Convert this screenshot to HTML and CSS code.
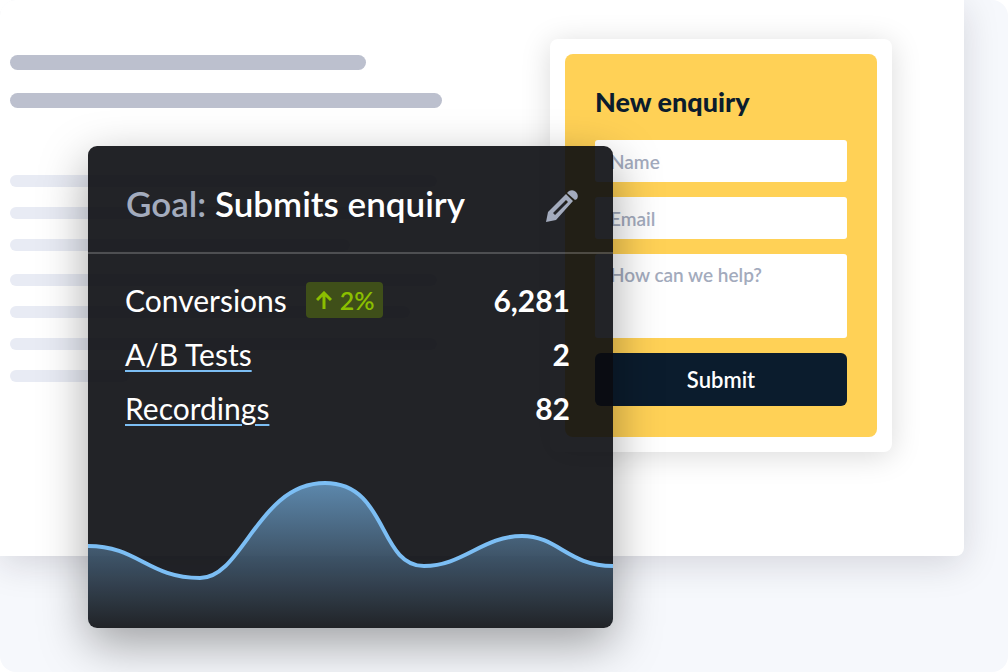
FILE: index.html
```html
<!DOCTYPE html>
<html lang="en">
<head>
  <meta charset="UTF-8" />
  <meta name="viewport" content="width=device-width, initial-scale=1" />
  <title>Goal: Submits enquiry</title>
  <link rel="stylesheet" href="styles.css">
</head>
<body>
  <main class="stage">
    <div class="site">
      <div class="copy" aria-hidden="true">
        <div class="headline">
          <span class="bar w-66"></span>
          <span class="bar w-80"></span>
        </div>
        <div class="paragraph">
          <span class="line w-79"></span>
          <span class="line w-79"></span>
          <span class="line w-63"></span>
        </div>
        <div class="paragraph">
          <span class="line w-79"></span>
          <span class="line w-74"></span>
          <span class="line w-79"></span>
          <span class="line w-22"></span>
        </div>
      </div>

      <div class="form-card">
        <form class="enquiry">
          <h2>New enquiry</h2>
          <input type="text" name="name" placeholder="Name" aria-label="Name" />
          <input type="email" name="email" placeholder="Email" aria-label="Email" />
          <textarea name="message" placeholder="How can we help?" aria-label="How can we help?"></textarea>
          <button type="button" class="submit">Submit</button>
        </form>
      </div>
    </div>

    <section class="goal">
      <header class="goal-header">
        <h1><span class="muted">Goal:</span> Submits enquiry</h1>
        <button type="button" class="edit" aria-label="Edit goal">
          <svg width="32" height="32" viewBox="0 0 32 32" fill="#a3abbd">
            <path fill-rule="evenodd" d="M0 32 L2 22 L20 4 L27 11 L10 30 Z M7 23 L9 25 L22 12 L20 10 Z" />
            <path d="M21 3 L23 1 Q27 -1 30 2 Q33 5 31 9 L29 10 Z" />
          </svg>
        </button>
      </header>

      <ul class="stats">
        <li>
          <span>Conversions</span>
          <span class="badge">
            <svg width="16" height="18" viewBox="0 0 16 18" fill="none" stroke="#8bbf00" stroke-width="3">
              <path d="M8 18 V2 M1 9 L8 2 L15 9" />
            </svg>
            2%
          </span>
          <strong>6,281</strong>
        </li>
        <li><a href="#tests">A/B Tests</a><strong>2</strong></li>
        <li><a href="#recordings">Recordings</a><strong>82</strong></li>
      </ul>

      <svg class="chart" viewBox="0 0 525 152" preserveAspectRatio="none" aria-hidden="true">
        <defs>
          <linearGradient id="fill" x1="0" y1="0" x2="0" y2="1">
            <stop offset="0" stop-color="#7cbef4" stop-opacity="0.65" />
            <stop offset="1" stop-color="#7cbef4" stop-opacity="0" />
          </linearGradient>
        </defs>
        <path fill="url(#fill)" d="M0 70 C50 70 60 102 112 102 C155 102 170 7 237 7 C300 7 290 90 336 90 C375 90 395 60 434 60 C470 60 480 90 525 90 V152 H0 Z" />
        <path fill="none" stroke="#7cbef4" stroke-width="4" d="M0 70 C50 70 60 102 112 102 C155 102 170 7 237 7 C300 7 290 90 336 90 C375 90 395 60 434 60 C470 60 480 90 525 90" />
      </svg>
    </section>
  </main>
</body>
</html>
```

FILE: styles.css
```css
* {
  box-sizing: border-box;
}

body {
  margin: 0;
  background: #fff;
  font-family: Lato, 'Open Sans', sans-serif;
  color: #0b1c2d;
}

.stage {
  position: relative;
  min-height: 100vh;
  padding-right: 44px;
  background: #f6f8fc;
  border-radius: 16px;
  overflow: hidden;
}

/* website in the background */
.site {
  display: flex;
  align-items: flex-start;
  padding: 39px 72px 104px 10px;
  background: #fff;
  border-radius: 0 0 8px 0;
  box-shadow: 0 8px 36px rgba(30, 20, 40, 0.15);
}

.copy {
  flex: 1;
  padding-top: 16px;
}

.headline,
.paragraph {
  display: flex;
  flex-direction: column;
}

.headline {
  gap: 23px;
  margin-bottom: 67px;
}

.paragraph {
  gap: 20px;
  margin-bottom: 23px;
}

.bar {
  height: 15px;
  border-radius: 8px;
  background: #bcc0ce;
}

.line {
  height: 12px;
  border-radius: 6px;
  background: #e8ebf4;
}

.w-80 { width: 80%; }
.w-79 { width: 79%; }
.w-74 { width: 74%; }
.w-66 { width: 66%; }
.w-63 { width: 63%; }
.w-22 { width: 22%; }

/* enquiry form */
.form-card {
  width: 342px;
  padding: 15px;
  background: #fff;
  border-radius: 8px;
  box-shadow: 0 4px 30px rgba(0, 0, 0, 0.15);
}

.enquiry {
  display: flex;
  flex-direction: column;
  gap: 15px;
  padding: 30px 30px 31px;
  background: #ffd156;
  border-radius: 8px;
}

.enquiry h2 {
  margin: 0 0 5px;
  font-size: 27px;
  font-weight: 900;
  line-height: 36px;
}

.enquiry input,
.enquiry textarea {
  width: 100%;
  height: 42px;
  margin: 0;
  padding: 0 15px;
  border: none;
  border-radius: 3px;
  background: #fff;
  font-family: inherit;
  font-size: 19px;
  font-weight: 600;
  line-height: 24px;
}

.enquiry textarea {
  height: 84px;
  padding-top: 9px;
  resize: none;
}

.enquiry ::placeholder {
  color: #a3abbd;
  opacity: 1;
}

.submit {
  height: 53px;
  border: none;
  border-radius: 6px;
  background: #0b1c2d;
  color: #fff;
  font-family: inherit;
  font-size: 22px;
  font-weight: 600;
  cursor: pointer;
}

/* goal card on top of the site */
.goal {
  position: absolute;
  top: 146px;
  left: 88px;
  width: 525px;
  max-width: calc(100% - 88px);
  border-radius: 9px;
  background: rgba(10, 11, 15, 0.9);
  box-shadow: 0 16px 48px rgba(0, 0, 0, 0.36);
  color: #fff;
  overflow: hidden;
}

.goal-header {
  display: flex;
  align-items: flex-end;
  justify-content: space-between;
  padding: 34px 35px 26px 38px;
  border-bottom: 2px solid rgba(255, 255, 255, 0.2);
}

.goal h1 {
  margin: 0;
  font-size: 35px;
  font-weight: 600;
  line-height: 46px;
}

.muted {
  color: #a3abbd;
}

.edit {
  display: flex;
  padding: 0 0 4px;
  border: none;
  background: none;
  cursor: pointer;
}

.stats {
  margin: 0;
  padding: 19px 43px 41px 37px;
  list-style: none;
}

.stats li {
  display: flex;
  align-items: center;
  height: 54px;
  font-size: 30px;
}

.stats strong {
  margin-left: auto;
  font-weight: 700;
}

.stats a {
  color: #fff;
  text-decoration: underline 2px #7cbef4;
  text-underline-offset: 4px;
}

.badge {
  display: flex;
  align-items: center;
  gap: 8px;
  height: 36px;
  margin-left: 19px;
  padding: 0 8px 0 10px;
  border-radius: 4px;
  background: #3f4f19;
  color: #8bbf00;
  font-size: 25px;
  font-weight: 600;
}

.chart {
  display: block;
  width: 100%;
  height: 152px;
}
```
